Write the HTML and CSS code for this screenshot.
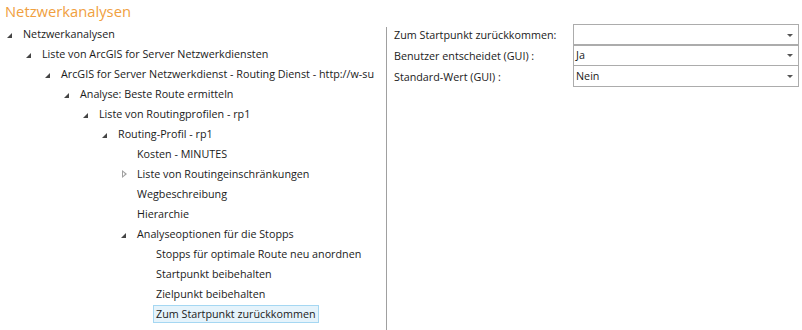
FILE: index.html
```html
<!DOCTYPE html>
<html lang="de">
<head>
    <meta charset="UTF-8">
    <title>Netzwerkanalysen</title>
    <link rel="stylesheet" href="styles.css">
</head>
<body>
<div class="title">Netzwerkanalysen</div>

<div class="main">
    <div class="tree">
        <ul class="level">
            <li>
                <div class="row"><span class="exp open"></span><span class="label">Netzwerkanalysen</span></div>
                <ul class="level">
                    <li>
                        <div class="row"><span class="exp open"></span><span class="label">Liste von ArcGIS for Server Netzwerkdiensten</span></div>
                        <ul class="level">
                            <li>
                                <div class="row"><span class="exp open"></span><span class="label">ArcGIS for Server Netzwerkdienst - Routing Dienst - http://w-sub.example.local/arcgis/rest/services</span></div>
                                <ul class="level">
                                    <li>
                                        <div class="row"><span class="exp open"></span><span class="label">Analyse: Beste Route ermitteln</span></div>
                                        <ul class="level">
                                            <li>
                                                <div class="row"><span class="exp open"></span><span class="label">Liste von Routingprofilen - rp1</span></div>
                                                <ul class="level">
                                                    <li>
                                                        <div class="row"><span class="exp open"></span><span class="label">Routing-Profil - rp1</span></div>
                                                        <ul class="level">
                                                            <li><div class="row"><span class="exp"></span><span class="label">Kosten - MINUTES</span></div></li>
                                                            <li><div class="row"><span class="exp closed"></span><span class="label">Liste von Routingeinschränkungen</span></div></li>
                                                            <li><div class="row"><span class="exp"></span><span class="label">Wegbeschreibung</span></div></li>
                                                            <li><div class="row"><span class="exp"></span><span class="label">Hierarchie</span></div></li>
                                                            <li>
                                                                <div class="row"><span class="exp open"></span><span class="label">Analyseoptionen für die Stopps</span></div>
                                                                <ul class="level">
                                                                    <li><div class="row"><span class="exp"></span><span class="label">Stopps für optimale Route neu anordnen</span></div></li>
                                                                    <li><div class="row"><span class="exp"></span><span class="label">Startpunkt beibehalten</span></div></li>
                                                                    <li><div class="row"><span class="exp"></span><span class="label">Zielpunkt beibehalten</span></div></li>
                                                                    <li><div class="row"><span class="exp"></span><span class="label selected">Zum Startpunkt zurückkommen</span></div></li>
                                                                </ul>
                                                            </li>
                                                        </ul>
                                                    </li>
                                                </ul>
                                            </li>
                                        </ul>
                                    </li>
                                </ul>
                            </li>
                        </ul>
                    </li>
                </ul>
            </li>
        </ul>
    </div>

    <div class="splitter"></div>

    <div class="props">
        <div class="prop-label">Zum Startpunkt zurückkommen:</div>
        <div class="combo"><span class="value"></span><span class="drop"></span></div>

        <div class="prop-label">Benutzer entscheidet (GUI) :</div>
        <div class="combo"><span class="value">Ja</span><span class="drop"></span></div>

        <div class="prop-label">Standard-Wert (GUI) :</div>
        <div class="combo"><span class="value">Nein</span><span class="drop"></span></div>
    </div>
</div>
</body>
</html>
```

FILE: styles.css
```css
body {
    margin: 0;
    font-family: "Open Sans", Arial, sans-serif;
    font-size: 10.75px;
    color: #1a1a1a;
    background: #fff;
    height: 330px;
    overflow: hidden;
}

.title {
    height: 22px;
    padding: 1px 0 0 5px;
    box-sizing: border-box;
    font-size: 14.75px;
    line-height: 21px;
    color: #f0a040;
}

.main {
    display: flex;
    height: 308px;
}

/* tree */

.tree {
    width: 371px;
    padding: 2px 0 0 4px;
    overflow: hidden;
}

.level {
    list-style: none;
    margin: 0;
    padding: 0;
}

.level .level {
    padding-left: 19px;
}

.row {
    display: flex;
    align-items: center;
    height: 20px;
    white-space: nowrap;
    overflow: hidden;
}

.exp {
    flex: none;
    width: 16px;
    height: 20px;
    position: relative;
}

.exp.open::before {
    content: "";
    position: absolute;
    left: 3px;
    top: 9px;
    border-style: solid;
    border-width: 0 0 5px 5px;
    border-color: transparent transparent #454545 transparent;
}

.exp.closed::before {
    content: "";
    position: absolute;
    left: 4px;
    top: 6px;
    width: 0;
    height: 0;
    border-style: solid;
    border-width: 4px 0 4px 5px;
    border-color: transparent transparent transparent #a0a0a0;
}

.exp.closed::after {
    content: "";
    position: absolute;
    left: 5px;
    top: 8px;
    border-style: solid;
    border-width: 2px 0 2px 2.5px;
    border-color: transparent transparent transparent #fff;
}

.label {
    min-width: 0;
    overflow: hidden;
    padding: 0 2px;
    line-height: 16px;
    border: 1px solid transparent;
}

.label.selected {
    background: #e5f3fb;
    border-color: #a5d7f2;
}

/* splitter */

.splitter {
    width: 1px;
    margin: 5px 0 0 11px;
    background: #a0a0a0;
}

/* property grid */

.props {
    display: grid;
    grid-template-columns: 179px 226px;
    grid-auto-rows: 21px;
    align-content: start;
    padding: 2px 0 0 7px;
}

.prop-label {
    padding-top: 4px;
    line-height: 15px;
    white-space: nowrap;
}

.combo {
    display: flex;
    align-items: center;
    height: 22px;
    border: 1px solid #acacac;
    box-sizing: border-box;
}

.combo + .prop-label + .combo {
    margin-top: -1px;
}

.value {
    flex: 1;
    padding-left: 2px;
}

.drop {
    width: 0;
    height: 0;
    margin-right: 5px;
    border-style: solid;
    border-width: 3px 3px 0 3px;
    border-color: #555 transparent transparent transparent;
}
```
